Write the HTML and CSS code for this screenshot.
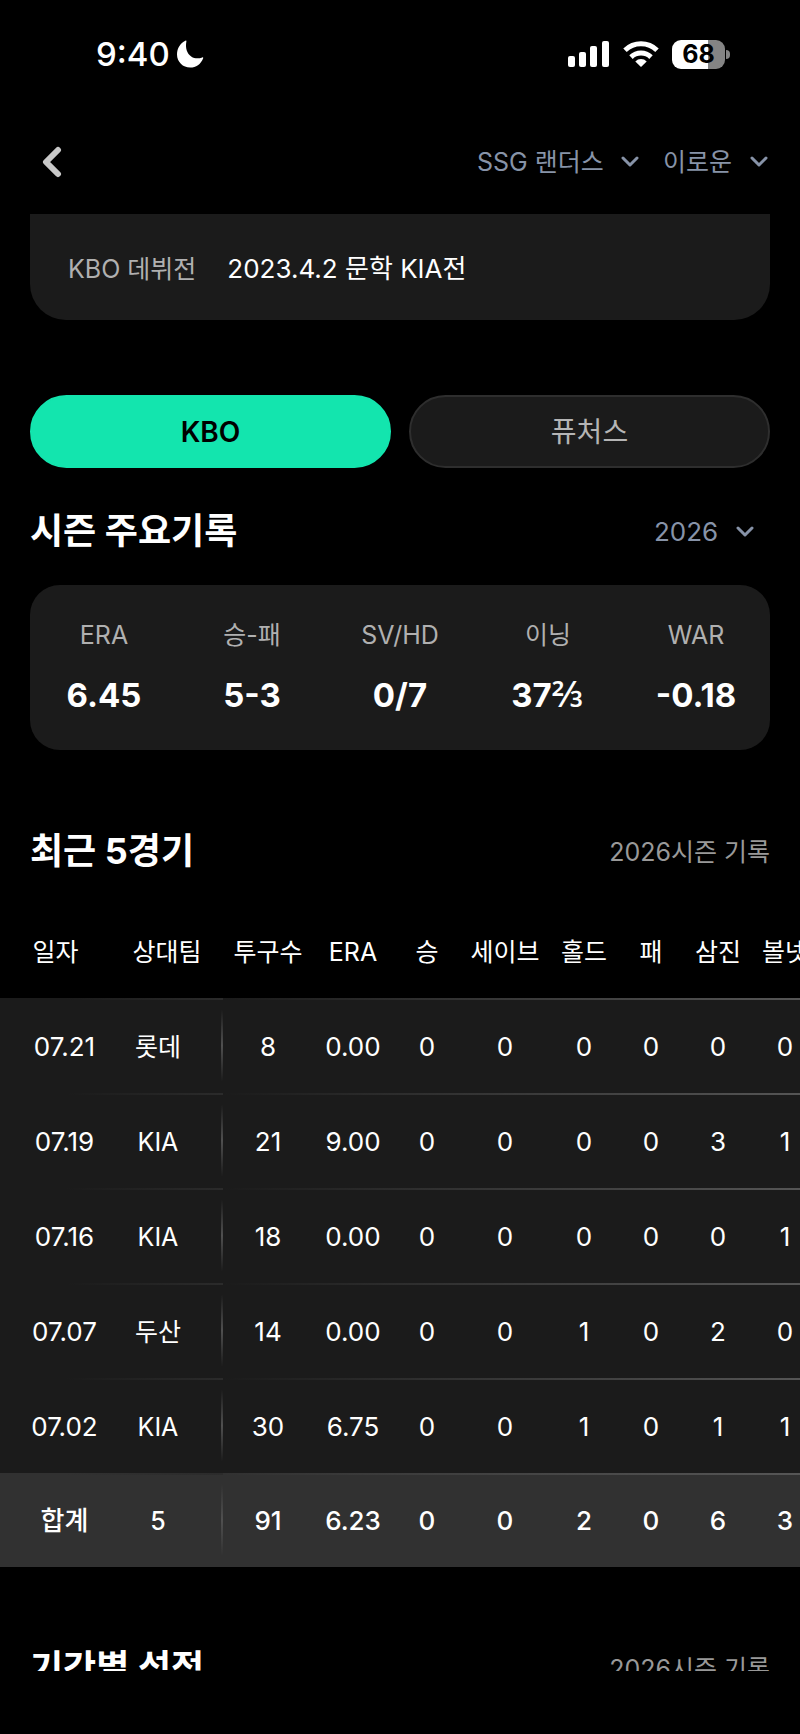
FILE: index.html
```html
<!DOCTYPE html>
<html lang="ko">
<head>
  <meta charset="UTF-8">
  <meta name="viewport" content="width=device-width, initial-scale=1">
  <title>이로운 - 선수 기록</title>
  <link rel="stylesheet" href="styles.css">
</head>
<body>
  <div class="status-bar">
    <div class="status-time">
      <span>9:40</span>
      <svg width="28" height="28" viewBox="0 0 28 28" fill="#fff" aria-hidden="true">
        <path d="M10.4 1.2C9 8.500 11.200 13.500 15.200 16.400C18.800 18.900 22.600 18.700 26.300 17.400C27 17.200 27.400 17.700 27.100 18.400C24.800 24.200 20 27.500 14.200 27.500C6.900 27.500 1 21.700 1 14.400C1 8.200 4.300 3 9.400.700C10.100.400 10.600.600 10.400 1.200Z"/>
      </svg>
    </div>
    <div class="status-icons">
      <svg width="42" height="26" viewBox="0 0 42 26" fill="#fff" aria-hidden="true">
        <rect x="0" y="15" width="7" height="11" rx="2"/>
        <rect x="11" y="11" width="7" height="15" rx="2"/>
        <rect x="22" y="5" width="7" height="21" rx="2"/>
        <rect x="34" y="0" width="7" height="26" rx="2"/>
      </svg>
      <svg width="36" height="26" viewBox="0 0 36 26" aria-hidden="true">
        <g fill="none" stroke="#fff" stroke-width="5">
          <path d="M2 9.300A23 23 0 0 1 34 9.300"/>
          <path d="M8 16.100A14.500 14.500 0 0 1 28 16.100"/>
        </g>
        <path d="M18 26L12.300 20.400A8.200 8.200 0 0 1 23.700 20.400Z" fill="#fff"/>
      </svg>
      <div class="battery"><span>68</span></div>
    </div>
  </div>

  <header class="top-nav">
    <button class="btn-back" type="button" aria-label="뒤로">
      <svg width="20" height="32" viewBox="0 0 20 32" fill="none" stroke="#c8c8c8" stroke-width="6" stroke-linecap="round" stroke-linejoin="round" aria-hidden="true">
        <path d="M16 4L4 16L16 28"/>
      </svg>
    </button>
    <div class="nav-selects">
      <div class="picker">
        <select aria-label="팀"><option>SSG 랜더스</option></select>
        <svg class="chevron" viewBox="0 0 18 12" aria-hidden="true"><path d="M2 2L9 9L16 2"/></svg>
      </div>
      <div class="picker">
        <select aria-label="선수"><option>이로운</option></select>
        <svg class="chevron" viewBox="0 0 18 12" aria-hidden="true"><path d="M2 2L9 9L16 2"/></svg>
      </div>
    </div>
  </header>

  <main>
    <dl class="profile">
      <dt>KBO 데뷔전</dt>
      <dd>2023.4.2 문학 KIA전</dd>
    </dl>

    <div class="league-tabs">
      <button class="tab active" type="button">KBO</button>
      <button class="tab" type="button">퓨처스</button>
    </div>

    <section class="season">
      <div class="section-head">
        <h2>시즌 주요기록</h2>
        <div class="picker year">
          <select aria-label="시즌"><option>2026</option></select>
          <svg class="chevron" viewBox="0 0 18 12" aria-hidden="true"><path d="M2 2L9 9L16 2"/></svg>
        </div>
      </div>
      <dl class="stats">
        <div><dt>ERA</dt><dd>6.45</dd></div>
        <div><dt>승-패</dt><dd>5-3</dd></div>
        <div><dt>SV/HD</dt><dd>0/7</dd></div>
        <div><dt>이닝</dt><dd>37<span class="frac">⅔</span></dd></div>
        <div><dt>WAR</dt><dd>-0.18</dd></div>
      </dl>
    </section>

    <section>
      <div class="section-head">
        <h2>최근 5경기</h2>
        <p>2026시즌 기록</p>
      </div>
      <div class="table-scroll">
        <table>
          <colgroup>
            <col class="c-date"><col class="c-team"><col class="c-pitch"><col class="c-era"><col class="c-win">
            <col class="c-save"><col class="c-mid"><col class="c-loss"><col class="c-mid"><col class="c-loss">
          </colgroup>
          <thead>
            <tr>
              <th class="date">일자</th><th class="team">상대팀</th><th>투구수</th><th>ERA</th><th>승</th>
              <th>세이브</th><th>홀드</th><th>패</th><th>삼진</th><th>볼넷</th>
            </tr>
          </thead>
          <tbody>
            <tr><td>07.21</td><td class="team">롯데</td><td>8</td><td>0.00</td><td>0</td><td>0</td><td>0</td><td>0</td><td>0</td><td>0</td></tr>
            <tr><td>07.19</td><td class="team">KIA</td><td>21</td><td>9.00</td><td>0</td><td>0</td><td>0</td><td>0</td><td>3</td><td>1</td></tr>
            <tr><td>07.16</td><td class="team">KIA</td><td>18</td><td>0.00</td><td>0</td><td>0</td><td>0</td><td>0</td><td>0</td><td>1</td></tr>
            <tr><td>07.07</td><td class="team">두산</td><td>14</td><td>0.00</td><td>0</td><td>0</td><td>1</td><td>0</td><td>2</td><td>0</td></tr>
            <tr><td>07.02</td><td class="team">KIA</td><td>30</td><td>6.75</td><td>0</td><td>0</td><td>1</td><td>0</td><td>1</td><td>1</td></tr>
          </tbody>
          <tfoot>
            <tr><td>합계</td><td class="team">5</td><td>91</td><td>6.23</td><td>0</td><td>0</td><td>2</td><td>0</td><td>6</td><td>3</td></tr>
          </tfoot>
        </table>
      </div>
    </section>

    <section>
      <div class="section-head">
        <h2>기간별 성적</h2>
        <p>2026시즌 기록</p>
      </div>
    </section>
  </main>
</body>
</html>
```
FILE: styles.css
```css
* {
  box-sizing: border-box;
}
body {
  margin: 0;
  height: 100vh;
  padding-bottom: 63px;
  display: flex;
  flex-direction: column;
  overflow: hidden;
  background-color: #000;
  color: #fff;
  font-family: Inter, "Noto Sans CJK KR", sans-serif;
  font-size: 25px;
  line-height: 30px;
}
h2, p, dl, dd {
  margin: 0;
}
button, select {
  font: inherit;
  color: inherit;
  border: none;
  background: none;
  padding: 0;
  cursor: pointer;
}

/* status bar */
.status-bar {
  flex: none;
  height: 108px;
  padding: 0 75px 0 96px;
  display: flex;
  justify-content: space-between;
  align-items: center;
}
.status-time {
  display: flex;
  align-items: center;
  gap: 6px;
  font-size: 33px;
  font-weight: 500;
  line-height: 40px;
}
.status-icons {
  display: flex;
  align-items: center;
  gap: 13px;
}
.battery {
  position: relative;
  width: 53px;
  height: 29px;
  border-radius: 9px;
  background: linear-gradient(to right, #fff 68%, #848484 68%);
  color: #000;
  font-weight: 700;
  line-height: 29px;
  text-align: center;
}
.battery::after {
  content: "";
  position: absolute;
  left: 54px;
  top: 10px;
  width: 4px;
  height: 9px;
  border-radius: 0 4px 4px 0;
  background-color: #848484;
}

/* top navigation */
.top-nav {
  flex: none;
  height: 106px;
  padding: 2px 32px 0 42px;
  display: flex;
  justify-content: space-between;
  align-items: center;
}
.btn-back {
  display: flex;
}
.nav-selects {
  display: flex;
  gap: 24px;
}
.picker {
  display: flex;
  align-items: center;
  gap: 17px;
  color: #8793a8;
}
.picker select {
  appearance: none;
}
.chevron {
  width: 18px;
  height: 12px;
  fill: none;
  stroke: #8793a8;
  stroke-width: 3;
  stroke-linecap: round;
  stroke-linejoin: round;
}

main {
  flex: 1;
  min-height: 0;
  overflow-x: hidden;
  overflow-y: auto;
  scrollbar-width: none;
}
.profile {
  margin: 0 30px;
  padding: 40px 38px 36px;
  display: flex;
  gap: 31px;
  border-radius: 0 0 36px 36px;
  background-color: #1b1b1b;
}
.profile dt {
  color: #b0b0b0;
}
.profile dd {
  font-size: 26px;
}

.league-tabs {
  display: flex;
  gap: 18px;
  margin: 75px 30px 0;
}
.tab {
  flex: 1;
  height: 73px;
  border: 2px solid #2e2e2e;
  border-radius: 37px;
  background-color: #1b1b1b;
  color: #b5b5b5;
  font-size: 28px;
}
.tab.active {
  border-color: #13e5ae;
  background-color: #13e5ae;
  color: #000;
  font-weight: 600;
}

/* sections */
section {
  margin-top: 76px;
}
.season {
  margin-top: 38px;
}
.section-head {
  display: flex;
  justify-content: space-between;
  align-items: center;
  height: 50px;
  margin: 0 30px 29px;
}
.section-head h2 {
  font-size: 36px;
  font-weight: 700;
  line-height: 50px;
}
.section-head p,
.section-head .picker {
  padding-top: 2px;
}
.section-head p {
  color: #999;
}
.year {
  padding-right: 16px;
  font-size: 26px;
}

.stats {
  display: grid;
  grid-template-columns: repeat(5, 1fr);
  margin: 0 30px;
  padding: 35px 0;
  border-radius: 30px;
  background-color: #1b1b1b;
  text-align: center;
}
.stats dt {
  color: #b0b0b0;
}
.stats dd {
  margin-top: 25px;
  font-size: 33px;
  font-weight: 700;
  line-height: 40px;
}
.frac {
  font-family: "Noto Sans", sans-serif;
  font-size: 36px;
  font-weight: 500;
  line-height: 1;
}

/* game log */
.table-scroll {
  overflow-x: auto;
  scrollbar-width: none;
}
table {
  width: 817px;
  table-layout: fixed;
  border-collapse: collapse;
  white-space: nowrap;
  text-align: center;
}
.c-date { width: 129px; }
.c-team { width: 94px; }
.c-pitch { width: 90px; }
.c-era { width: 80px; }
.c-win { width: 68px; }
.c-save { width: 88px; }
.c-mid { width: 70px; }
.c-loss { width: 64px; }
th, td {
  height: 95px;
  padding: 2px 0 0;
  font-weight: 400;
}
td {
  font-size: 26px;
}
th {
  height: 93px;
  padding-top: 0;
}
th.date,
th.team {
  padding-right: 18px;
}
tbody tr, tfoot tr {
  background-color: #1b1b1b;
  background-image:
    linear-gradient(to right, transparent 30%, #2b2b2b),
    linear-gradient(to right, transparent, #575757);
  background-position: 0 0, 223px 0;
  background-size: 223px 2px, 594px 2px;
  background-repeat: no-repeat;
}
td.team {
  padding-right: 36px;
  background: linear-gradient(to bottom, transparent 12%, #505050 50%, transparent 88%) right center / 2px 100% no-repeat;
  font-size: 25px;
}
tfoot tr {
  background-color: #313131;
}
tfoot td {
  height: 94px;
  font-weight: 500;
}
```
